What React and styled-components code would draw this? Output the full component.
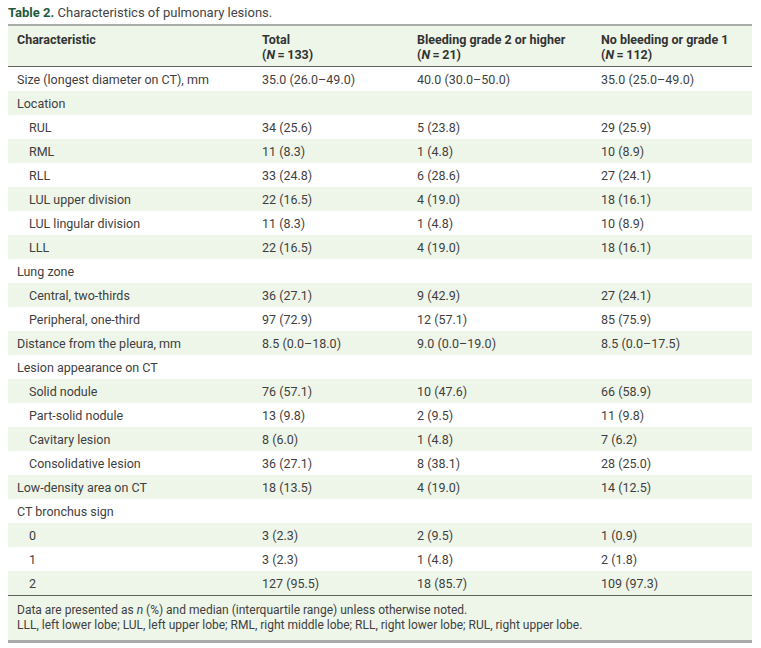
import React from "react";
import styled, { createGlobalStyle } from "styled-components";

const rows = [
  ["Size (longest diameter on CT), mm", "35.0 (26.0–49.0)", "40.0 (30.0–50.0)", "35.0 (25.0–49.0)"],
  ["Location"],
  ["RUL", "34 (25.6)", "5 (23.8)", "29 (25.9)", true],
  ["RML", "11 (8.3)", "1 (4.8)", "10 (8.9)", true],
  ["RLL", "33 (24.8)", "6 (28.6)", "27 (24.1)", true],
  ["LUL upper division", "22 (16.5)", "4 (19.0)", "18 (16.1)", true],
  ["LUL lingular division", "11 (8.3)", "1 (4.8)", "10 (8.9)", true],
  ["LLL", "22 (16.5)", "4 (19.0)", "18 (16.1)", true],
  ["Lung zone"],
  ["Central, two-thirds", "36 (27.1)", "9 (42.9)", "27 (24.1)", true],
  ["Peripheral, one-third", "97 (72.9)", "12 (57.1)", "85 (75.9)", true],
  ["Distance from the pleura, mm", "8.5 (0.0–18.0)", "9.0 (0.0–19.0)", "8.5 (0.0–17.5)"],
  ["Lesion appearance on CT"],
  ["Solid nodule", "76 (57.1)", "10 (47.6)", "66 (58.9)", true],
  ["Part-solid nodule", "13 (9.8)", "2 (9.5)", "11 (9.8)", true],
  ["Cavitary lesion", "8 (6.0)", "1 (4.8)", "7 (6.2)", true],
  ["Consolidative lesion", "36 (27.1)", "8 (38.1)", "28 (25.0)", true],
  ["Low-density area on CT", "18 (13.5)", "4 (19.0)", "14 (12.5)"],
  ["CT bronchus sign"],
  ["0", "3 (2.3)", "2 (9.5)", "1 (0.9)", true],
  ["1", "3 (2.3)", "1 (4.8)", "2 (1.8)", true],
  ["2", "127 (95.5)", "18 (85.7)", "109 (97.3)", true],
];

export default function App() {
  return (
    <>
      <GlobalStyle />
      <Wrap>
        <Caption>
          <b>Table 2.</b> Characteristics of pulmonary lesions.
        </Caption>
        <Table role="table">
          <HeadRow>
            <HeadCell>Characteristic</HeadCell>
            <HeadCell>
              Total
              <br />(<i>N</i>&thinsp;=&thinsp;133)
            </HeadCell>
            <HeadCell>
              Bleeding grade 2 or higher
              <br />(<i>N</i>&thinsp;=&thinsp;21)
            </HeadCell>
            <HeadCell>
              No bleeding or grade 1
              <br />(<i>N</i>&thinsp;=&thinsp;112)
            </HeadCell>
          </HeadRow>
          <Body>
            {rows.map((r, i) => (
              <Row key={i} $shade={i % 2 === 1}>
                <Cell $indent={r[4]}>{r[0]}</Cell>
                <Cell>{r[1] || ""}</Cell>
                <Cell>{r[2] || ""}</Cell>
                <Cell>{r[3] || ""}</Cell>
              </Row>
            ))}
          </Body>
          <Foot>
            Data are presented as <i>n</i> (%) and median (interquartile range) unless otherwise noted.
            <br />
            LLL, left lower lobe; LUL, left upper lobe; RML, right middle lobe; RLL, right lower lobe; RUL, right upper lobe.
          </Foot>
        </Table>
      </Wrap>
    </>
  );
}

const GlobalStyle = createGlobalStyle`
  body {
    margin: 0;
    background: #ffffff;
    font-family: Roboto, "Liberation Sans", sans-serif;
    color: #3a3a3a;
  }
`;

const cols = "245px 155px 184px 160px";

const Wrap = styled.div`
  padding: 4px 9px 0 8px;
`;

const Caption = styled.div`
  font-size: 13px;
  line-height: 18px;
  color: #444;
  margin-bottom: 2px;
  b {
    color: #1d5b3c;
    font-weight: 700;
  }
`;

const Table = styled.div`
  width: 744px;
  font-size: 12.5px;
  border-top: 2px solid #a9aca8;
  border-bottom: 3px solid #a9aca8;
`;

const HeadRow = styled.div`
  display: grid;
  grid-template-columns: ${cols};
  height: 40px;
  background: #eef5e9;
  border-bottom: 1px solid #5f615e;
`;

const HeadCell = styled.div`
  padding: 6px 9px 0;
  font-weight: 700;
  line-height: 15px;
  color: #333;
`;

const Body = styled.div`
  border-bottom: 1px solid #5f615e;
`;

const Row = styled.div`
  display: grid;
  grid-template-columns: ${cols};
  align-items: center;
  height: 24px;
  background: ${(p) => (p.$shade ? "#eef5e9" : "#ffffff")};
`;

const Cell = styled.div`
  padding: 0 9px 0 ${(p) => (p.$indent ? "21px" : "9px")};
  line-height: 15px;
  color: #3f3f3f;
  white-space: nowrap;
`;

const Foot = styled.div`
  background: #eef5e9;
  padding: 7px 9px 7px;
  line-height: 15px;
  font-size: 12px;
  color: #3f3f3f;
`;
